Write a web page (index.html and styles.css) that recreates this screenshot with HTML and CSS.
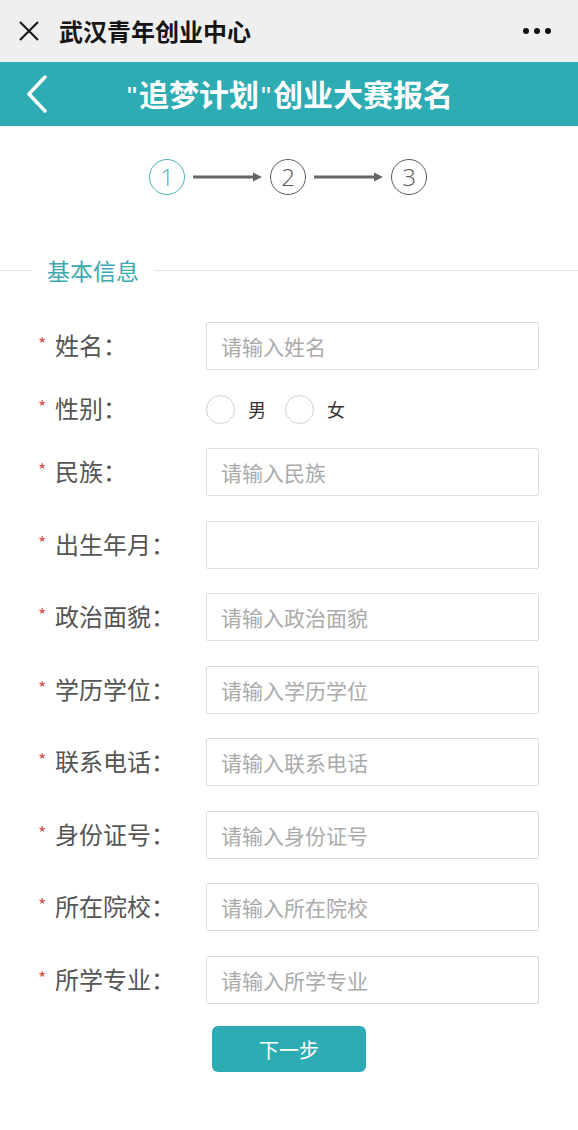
FILE: index.html
```html
<!DOCTYPE html>
<html lang="zh-CN">
<head>
<meta charset="utf-8">
<title>"追梦计划"创业大赛报名</title>
<link rel="stylesheet" href="styles.css">
</head>
<body>
<div class="topbar">
  <svg class="close-icon" width="20" height="20" viewBox="0 0 20 20"><path d="M1 1 L19 19 M19 1 L1 19" stroke="#1a1a1a" stroke-width="2.2" fill="none"/></svg>
  <div class="topbar-title">武汉青年创业中心</div>
  <div class="dots"><span></span><span></span><span></span></div>
</div>
<div class="header">
  <div class="back"><svg width="22" height="38" viewBox="0 0 22 38"><path d="M19 2 L3 19 L19 36" stroke="#fff" stroke-width="3.5" fill="none" stroke-linecap="round" stroke-linejoin="round"/></svg></div>
  <div class="header-title"><span class="quote">"</span>追梦计划<span class="quote">"</span>创业大赛报名</div>
  <div></div>
</div>
<div class="steps">
  <div class="step active">1</div>
  <svg class="arrow" width="69" height="12" viewBox="0 0 69 12"><path d="M0 6 H61" stroke="#666" stroke-width="3"/><path d="M60 1.5 L69 6 L60 10.5 Z" fill="#666"/></svg>
  <div class="step">2</div>
  <svg class="arrow" width="69" height="12" viewBox="0 0 69 12"><path d="M0 6 H61" stroke="#666" stroke-width="3"/><path d="M60 1.5 L69 6 L60 10.5 Z" fill="#666"/></svg>
  <div class="step">3</div>
</div>
<div class="section-title">
  <div class="line-left"></div>
  <div class="section-text">基本信息</div>
  <div class="line-right"></div>
</div>
<form class="form">
  <div class="row"><label class="label"><span class="req">*</span>姓名：</label><input class="field" placeholder="请输入姓名"></div>
  <div class="row row-radio"><label class="label"><span class="req">*</span>性别：</label>
    <div class="radios">
      <label class="radio"><input type="radio" name="sex"><span>男</span></label>
      <label class="radio"><input type="radio" name="sex"><span>女</span></label>
    </div>
  </div>
  <div class="row"><label class="label"><span class="req">*</span>民族：</label><input class="field" placeholder="请输入民族"></div>
  <div class="row"><label class="label"><span class="req">*</span>出生年月：</label><input class="field" placeholder=""></div>
  <div class="row"><label class="label"><span class="req">*</span>政治面貌：</label><input class="field" placeholder="请输入政治面貌"></div>
  <div class="row"><label class="label"><span class="req">*</span>学历学位：</label><input class="field" placeholder="请输入学历学位"></div>
  <div class="row"><label class="label"><span class="req">*</span>联系电话：</label><input class="field" placeholder="请输入联系电话"></div>
  <div class="row"><label class="label"><span class="req">*</span>身份证号：</label><input class="field" placeholder="请输入身份证号"></div>
  <div class="row"><label class="label"><span class="req">*</span>所在院校：</label><input class="field" placeholder="请输入所在院校"></div>
  <div class="row"><label class="label"><span class="req">*</span>所学专业：</label><input class="field" placeholder="请输入所学专业"></div>
  <button type="button" class="next">下一步</button>
</form>
</body>
</html>
```
FILE: styles.css
```css
* { box-sizing: border-box; }
html, body { margin: 0; padding: 0; }
body {
  width: 578px;
  background: #fff;
  font-family: "Noto Sans CJK SC", "Noto Sans", sans-serif;
  color: #333;
}
.topbar {
  height: 62px;
  background: #efefef;
  display: flex;
  align-items: center;
  padding: 0 27px 0 19px;
}
.close-icon { flex: none; }
.topbar-title {
  margin-left: 20px;
  font-size: 24px;
  font-weight: 700;
  color: #151515;
  flex: 1;
  line-height: 1;
}
.dots { display: flex; gap: 5px; }
.dots span {
  width: 6px; height: 6px; border-radius: 50%; background: #111; display: block;
}
.header {
  height: 64px;
  background: #2eacb4;
  display: grid;
  grid-template-columns: 1fr auto 1fr;
  align-items: center;
}
.back { padding-left: 26px; display: flex; align-items: center; }
.header-title {
  color: #fff;
  font-size: 30px;
  font-weight: 700;
  line-height: 1;
}
.quote {
  font-weight: 400;
  font-family: "Liberation Sans", sans-serif;
  font-size: 28px;
  padding: 0 2px;
}
.steps {
  display: flex;
  justify-content: center;
  align-items: center;
  gap: 8px;
  padding-top: 33px;
  padding-right: 2px;
}
.step {
  width: 36px; height: 36px;
  border: 1.5px solid #5a5a5a;
  border-radius: 50%;
  display: flex; align-items: center; justify-content: center;
  font-family: "Open Sans", sans-serif;
  font-weight: 300;
  font-size: 24px;
  color: #555;
  line-height: 1;
}
.step.active { border-color: #49b1b7; color: #49b1b7; }
.section-title {
  margin-top: 60px;
  display: flex;
  align-items: center;
}
.line-left { width: 32px; height: 1px; background: #e4e4e4; }
.line-right { flex: 1; height: 1px; background: #e4e4e4; }
.section-text {
  padding: 0 15px;
  font-size: 23px;
  line-height: 30px;
  color: #3aa9b0;
}
.form {
  padding: 37px 39px 40px 38px;
  display: flex;
  flex-direction: column;
  gap: 24.5px;
}
.row { display: flex; align-items: center; }
.label {
  width: 168px;
  flex: none;
  font-size: 24px;
  color: #555;
  line-height: 30px;
  display: flex;
  align-items: center;
  position: relative;
  top: -1px;
}
.req {
  width: 17px;
  color: #d9534f;
  font-size: 18px;
  align-self: flex-start;
  line-height: 26px;
}
.field {
  flex: 1;
  min-width: 0;
  height: 48px;
  border: 1.5px solid #dcdcdc;
  border-radius: 2px;
  padding: 0 14px;
  font-family: "Noto Sans CJK SC", sans-serif;
  font-size: 21px;
  color: #333;
  outline: none;
  background: #fff;
}
.field::placeholder { color: #ababab; }
.row-radio { height: 29px; }
.radios { display: flex; align-items: center; gap: 19px; }
.radio { display: flex; align-items: center; gap: 13px; font-size: 18px; color: #333; }
.radio input {
  appearance: none;
  -webkit-appearance: none;
  margin: 0;
  width: 29px; height: 29px;
  border: 1.5px solid #cfcfcf;
  border-radius: 50%;
  background: #fff;
}
.next {
  margin: -2px auto 0;
  width: 154px;
  height: 46px;
  border: none;
  border-radius: 6px;
  background: #2eacb4;
  color: #fff;
  font-family: "Noto Sans CJK SC", sans-serif;
  font-size: 20px;
  position: relative;
  left: 0.5px;
}
```
